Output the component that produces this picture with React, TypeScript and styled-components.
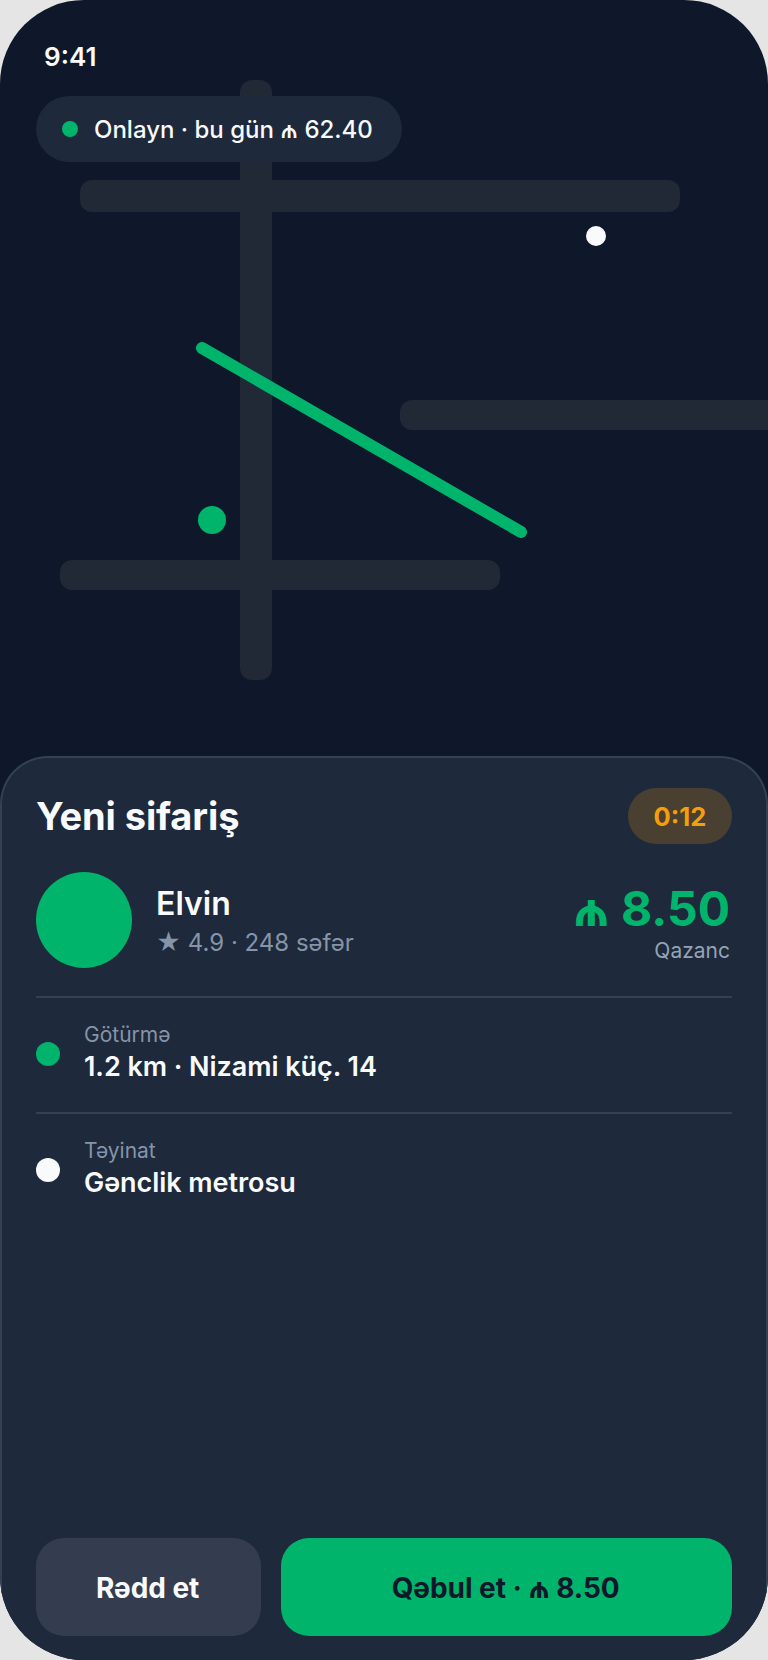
import React from "react";
import styled, { createGlobalStyle } from "styled-components";

const Global = createGlobalStyle`
  html, body { margin: 0; padding: 0; background: #e5e5e5; }
  * { box-sizing: border-box; }
`;

const Phone = styled.div`
  position: relative;
  width: 768px;
  height: 1660px;
  border-radius: 84px;
  overflow: hidden;
  background: #0f172a;
  display: flex;
  flex-direction: column;
  font-family: Inter, "Noto Sans", sans-serif;
  color: #f8fafc;
`;

const MapArea = styled.div`
  position: relative;
  flex: 1;
  padding: 40px 36px 0;
`;

const Road = styled.div<{ $x: number; $y: number; $w: number; $h: number; $r: number }>`
  position: absolute;
  left: ${(p) => p.$x}px;
  top: ${(p) => p.$y}px;
  width: ${(p) => p.$w}px;
  height: ${(p) => p.$h}px;
  border-radius: ${(p) => p.$r}px;
  background: #212937;
`;

const Route = styled.svg`
  position: absolute;
  left: 0;
  top: 0;
`;

const Marker = styled.div<{ $x: number; $y: number; $size: number; $color: string }>`
  position: absolute;
  left: ${(p) => p.$x}px;
  top: ${(p) => p.$y}px;
  width: ${(p) => p.$size}px;
  height: ${(p) => p.$size}px;
  border-radius: 50%;
  background: ${(p) => p.$color};
`;

const Clock = styled.div`
  position: relative;
  margin-left: 8px;
  font-size: 26px;
  line-height: 34px;
  font-weight: 600;
`;

const StatusPill = styled.div`
  position: relative;
  display: inline-flex;
  align-items: center;
  gap: 16px;
  height: 66px;
  width: 366px;
  margin-top: 22px;
  padding: 0 28px 0 26px;
  border-radius: 33px;
  background: #1e293b;
  font-size: 24px;
  font-weight: 500;
`;

const Dot = styled.span<{ $size: number; $color: string }>`
  flex: none;
  width: ${(p) => p.$size}px;
  height: ${(p) => p.$size}px;
  border-radius: 50%;
  background: ${(p) => p.$color};
`;

const Sheet = styled.div`
  flex: none;
  height: 904px;
  display: flex;
  flex-direction: column;
  padding: 30px 34px 24px;
  background: #1e293b;
  border: 2px solid #334155;
  border-bottom: 0;
  border-radius: 48px 48px 0 0;
`;

const Header = styled.div`
  display: flex;
  align-items: center;
  justify-content: space-between;
`;

const Title = styled.h2`
  margin: 0;
  font-size: 38px;
  line-height: 56px;
  font-weight: 700;
  letter-spacing: -0.1px;
`;

const Timer = styled.div`
  width: 104px;
  height: 56px;
  border-radius: 28px;
  display: flex;
  align-items: center;
  justify-content: center;
  background: rgba(245, 158, 11, 0.2);
  color: #f59e0b;
  font-size: 25.5px;
  font-weight: 700;
`;

const Rider = styled.div`
  display: flex;
  align-items: center;
  gap: 24px;
  margin-top: 28px;
  padding-bottom: 28px;
  border-bottom: 2px solid #334155;
`;

const Avatar = styled.div`
  flex: none;
  width: 96px;
  height: 96px;
  border-radius: 50%;
  background: #00b46c;
`;

const RiderInfo = styled.div`
  flex: 1;
  padding-top: 3px;
`;

const RiderName = styled.div`
  font-size: 32px;
  line-height: 40px;
  font-weight: 600;
`;

const RiderMeta = styled.div`
  margin-top: 3px;
  font-size: 24px;
  line-height: 32px;
  color: #8594a9;
`;

const Earnings = styled.div`
  margin-right: 2px;
  padding-top: 4px;
  text-align: right;
`;

const Amount = styled.div`
  font-size: 48px;
  line-height: 58px;
  font-weight: 700;
  color: #00b46c;
`;

const AmountLabel = styled.div`
  font-size: 21px;
  line-height: 26px;
  color: #94a3b8;
`;

const Stop = styled.div<{ $divided?: boolean }>`
  display: flex;
  align-items: center;
  gap: 24px;
  padding: 24px 0 27px;
  border-bottom: ${(p) => (p.$divided ? "2px solid #334155" : "0")};
`;

const StopLabel = styled.div`
  font-size: 21px;
  line-height: 26px;
  color: #8594a9;
`;

const StopValue = styled.div`
  margin-top: 1px;
  font-size: 27px;
  line-height: 36px;
  font-weight: 600;
  letter-spacing: -0.05px;
`;

const Actions = styled.div`
  margin-top: auto;
  display: grid;
  grid-template-columns: 1fr 2fr;
  gap: 20px;
`;

const Action = styled.button<{ $primary?: boolean }>`
  height: 98px;
  padding: 2px 2px 0 0;
  border: 0;
  border-radius: 28px;
  background: ${(p) => (p.$primary ? "#00b46c" : "#343d4f")};
  color: ${(p) => (p.$primary ? "#0f172a" : "#f8fafc")};
  font-family: inherit;
  font-size: 28px;
  font-weight: 700;
  letter-spacing: -0.05px;
`;

export default function App() {
  return (
    <>
      <Global />
      <Phone>
        <MapArea>
          <Road $x={240} $y={80} $w={32} $h={600} $r={12} />
          <Road $x={80} $y={180} $w={600} $h={32} $r={12} />
          <Road $x={400} $y={400} $w={400} $h={30} $r={12} />
          <Road $x={60} $y={560} $w={440} $h={30} $r={12} />
          <Route width="768" height="756">
            <line x1="202" y1="348" x2="521" y2="532" stroke="#00b46c" strokeWidth="12" strokeLinecap="round" />
          </Route>
          <Marker $x={198} $y={506} $size={28} $color="#00b46c" />
          <Marker $x={586} $y={226} $size={20} $color="#f8fafc" />
          <Clock>9:41</Clock>
          <StatusPill>
            <Dot $size={16} $color="#00b46c" />
            Onlayn · bu gün ₼ 62.40
          </StatusPill>
        </MapArea>
        <Sheet>
          <Header>
            <Title>Yeni sifariş</Title>
            <Timer>0:12</Timer>
          </Header>
          <Rider>
            <Avatar />
            <RiderInfo>
              <RiderName>Elvin</RiderName>
              <RiderMeta>★ 4.9 · 248 səfər</RiderMeta>
            </RiderInfo>
            <Earnings>
              <Amount>₼ 8.50</Amount>
              <AmountLabel>Qazanc</AmountLabel>
            </Earnings>
          </Rider>
          <Stop $divided>
            <Dot $size={24} $color="#00b46c" />
            <div>
              <StopLabel>Götürmə</StopLabel>
              <StopValue>1.2 km · Nizami küç. 14</StopValue>
            </div>
          </Stop>
          <Stop>
            <Dot $size={24} $color="#f8fafc" />
            <div>
              <StopLabel>Təyinat</StopLabel>
              <StopValue>Gənclik metrosu</StopValue>
            </div>
          </Stop>
          <Actions>
            <Action>Rədd et</Action>
            <Action $primary>Qəbul et · ₼ 8.50</Action>
          </Actions>
        </Sheet>
      </Phone>
    </>
  );
}
